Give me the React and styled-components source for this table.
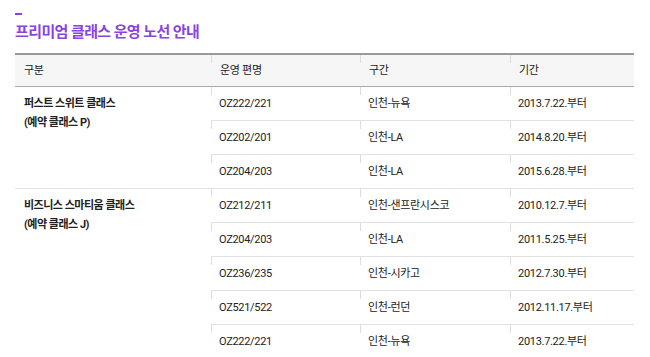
import React from "react";
import styled, { createGlobalStyle } from "styled-components";

const GlobalStyle = createGlobalStyle`
  body {
    margin: 0;
    background: #fff;
    font-family: Roboto, "Noto Sans CJK KR", sans-serif;
    color: #222;
  }
`;

const Page = styled.div`
  padding: 13px 16px 0 15px;
`;

const Dash = styled.div`
  width: 7px;
  height: 2px;
  background: #8a43e0;
`;

const Title = styled.h2`
  margin: 7px 0 11px;
  font-size: 15px;
  font-weight: 700;
  line-height: 20px;
  color: #8a43e0;
  letter-spacing: -0.6px;
`;

const Table = styled.table`
  width: 619px;
  border-collapse: collapse;
  table-layout: fixed;
  border-top: 2px solid #9a9a9a;
  font-size: 11px;
  line-height: 16px;
`;

const Head = styled.th`
  position: relative;
  height: 31px;
  padding: 0 9px;
  background: #f6f6f6;
  border-bottom: 1px solid #aaa;
  text-align: left;
  font-weight: 400;
  letter-spacing: -0.3px;

  ${({ $tick }) => $tick && `
    &::before {
      content: "";
      position: absolute;
      left: 0;
      top: 0;
      width: 1px;
      height: 8px;
      background: #ddd;
    }
  `}
`;

const Cell = styled.td`
  position: relative;
  height: 33px;
  padding: 0 8px;
  border-bottom: 1px solid #e2e2e2;
  vertical-align: middle;
  letter-spacing: -0.3px;

  &::before {
    content: "";
    position: absolute;
    left: 0;
    top: 0;
    width: 1px;
    height: 8px;
    background: #ddd;
  }
`;

const GroupCell = styled.td`
  padding: 7px 9px 0;
  border-bottom: 1px solid #e2e2e2;
  vertical-align: top;
  font-weight: 700;
  line-height: 19px;
  letter-spacing: -0.5px;
`;

const groups = [
  {
    name: "퍼스트 스위트 클래스",
    code: "(예약 클래스 P)",
    routes: [
      ["OZ222/221", "인천-뉴욕", "2013.7.22.부터"],
      ["OZ202/201", "인천-LA", "2014.8.20.부터"],
      ["OZ204/203", "인천-LA", "2015.6.28.부터"],
    ],
  },
  {
    name: "비즈니스 스마티움 클래스",
    code: "(예약 클래스 J)",
    routes: [
      ["OZ212/211", "인천-샌프란시스코", "2010.12.7.부터"],
      ["OZ204/203", "인천-LA", "2011.5.25.부터"],
      ["OZ236/235", "인천-시카고", "2012.7.30.부터"],
      ["OZ521/522", "인천-런던", "2012.11.17.부터"],
      ["OZ222/221", "인천-뉴욕", "2013.7.22.부터"],
    ],
  },
];

export default function App() {
  return (
    <Page>
      <GlobalStyle />
      <Dash />
      <Title>프리미엄 클래스 운영 노선 안내</Title>
      <Table>
        <colgroup>
          <col style={{ width: 196 }} />
          <col style={{ width: 149 }} />
          <col style={{ width: 150 }} />
          <col style={{ width: 124 }} />
        </colgroup>
        <thead>
          <tr>
            <Head>구분</Head>
            <Head $tick>운영 편명</Head>
            <Head $tick>구간</Head>
            <Head $tick>기간</Head>
          </tr>
        </thead>
        <tbody>
          {groups.map((g) =>
            g.routes.map((r, i) => (
              <tr key={g.name + i}>
                {i === 0 && (
                  <GroupCell rowSpan={g.routes.length}>
                    {g.name}
                    <br />
                    {g.code}
                  </GroupCell>
                )}
                {r.map((v, j) => (
                  <Cell key={j}>{v}</Cell>
                ))}
              </tr>
            ))
          )}
        </tbody>
      </Table>
    </Page>
  );
}
